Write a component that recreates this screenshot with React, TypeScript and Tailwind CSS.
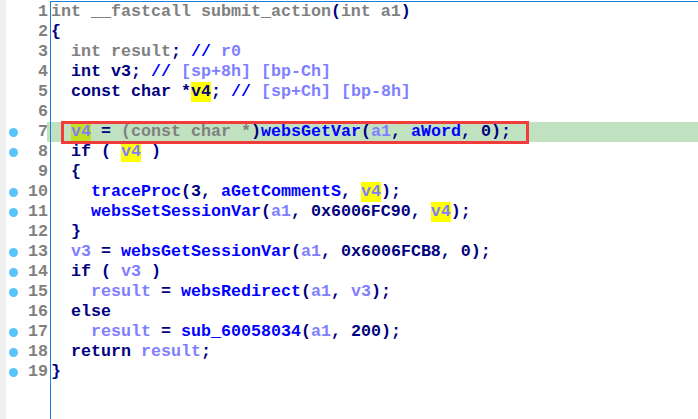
import React from 'react';

const navy = '#000080';
const gray = '#808080';
const blue = '#0000ff';
const lav = '#8080ff';

type Tok = [string, string, string?];

const lines: { toks: Tok[]; dot?: boolean; current?: boolean }[] = [
  { toks: [['int __fastcall submit_action', gray], ['(', navy], ['int a1', gray], [')', navy]] },
  { toks: [['{', navy]] },
  { toks: [['  int result', gray], ['; ', navy], ['// ', blue], ['r0', lav]] },
  { toks: [['  int v3; ', navy], ['// ', blue], ['[sp+8h] [bp-Ch]', lav]] },
  { toks: [['  const char *', navy], ['v4', navy, '#ffff00'], ['; ', navy], ['// ', blue], ['[sp+Ch] [bp-8h]', lav]] },
  { toks: [['', navy]] },
  {
    dot: true,
    current: true,
    toks: [
      ['  ', navy],
      ['v4', lav, '#c0e020'],
      [' = ', navy],
      ['(const char *', gray],
      [')', navy],
      ['websGetVar', blue],
      ['(', navy],
      ['a1', lav],
      [', ', navy],
      ['aWord', blue],
      [', 0);', navy],
    ],
  },
  { dot: true, toks: [['  if ( ', navy], ['v4', lav, '#ffff00'], [' )', navy]] },
  { toks: [['  {', navy]] },
  {
    dot: true,
    toks: [['    ', navy], ['traceProc', blue], ['(3, ', navy], ['aGetCommentS', blue], [', ', navy], ['v4', lav, '#ffff00'], [');', navy]],
  },
  {
    dot: true,
    toks: [['    ', navy], ['websSetSessionVar', blue], ['(', navy], ['a1', lav], [', 0x6006FC90, ', navy], ['v4', lav, '#ffff00'], [');', navy]],
  },
  { toks: [['  }', navy]] },
  {
    dot: true,
    toks: [['  ', navy], ['v3', lav], [' = ', navy], ['websGetSessionVar', blue], ['(', navy], ['a1', lav], [', 0x6006FCB8, 0);', navy]],
  },
  { dot: true, toks: [['  if ( ', navy], ['v3', lav], [' )', navy]] },
  {
    dot: true,
    toks: [['    ', navy], ['result', lav], [' = ', navy], ['websRedirect', blue], ['(', navy], ['a1', lav], [', ', navy], ['v3', lav], [');', navy]],
  },
  { toks: [['  else', navy]] },
  {
    dot: true,
    toks: [['    ', navy], ['result', lav], [' = ', navy], ['sub_60058034', blue], ['(', navy], ['a1', lav], [', 200);', navy]],
  },
  { dot: true, toks: [['  return ', navy], ['result', lav], [';', navy]] },
  { dot: true, toks: [['}', navy]] },
];

const App: React.FC = () => {
  return (
    <div
      className="relative w-[698px] h-[419px] overflow-hidden bg-white text-[16.67px] font-bold leading-[20px]"
      style={{ fontFamily: '"Liberation Mono", "DejaVu Sans Mono", monospace' }}
    >
      <div className="flex h-full">
        {/* gutter */}
        <div className="relative w-[50px] h-full pt-[2px] bg-white">
          <div className="absolute left-0 top-0 bottom-0 w-[6px] bg-[#f0f0f0]" />
          {lines.map((ln, i) => (
            <div key={i} className="relative flex items-center h-[20px]">
              <div className="w-[9px] ml-[9px] h-[9px]">
                {ln.dot && <div className="w-[9px] h-[9px] rounded-full bg-[#58c4fa]" />}
              </div>
              <div className="flex-1 text-right pr-[2px] text-[#808080] whitespace-pre">{i + 1}</div>
              {ln.current && <div className="absolute right-0 top-0 w-[3px] h-[20px] bg-[#c0e2c0]" />}
            </div>
          ))}
        </div>
        {/* code */}
        <div className="flex-1 h-full border-l border-t border-[#1a7fd8] mt-[1px] pt-0">
          {lines.map((ln, i) => (
            <div key={i} className={`h-[20px] whitespace-pre ${ln.current ? 'bg-[#c0e2c0]' : ''}`}>
              {ln.toks.map(([t, c, bg], j) => (
                <span key={j} style={{ color: c, backgroundColor: bg }} className="inline-block h-[20px]">
                  {t}
                </span>
              ))}
            </div>
          ))}
        </div>
      </div>
      <div className="absolute left-[61px] top-[121px] w-[468px] h-[23px] border-[3px] border-[#f23c3c]" />
    </div>
  );
};

export default App;
